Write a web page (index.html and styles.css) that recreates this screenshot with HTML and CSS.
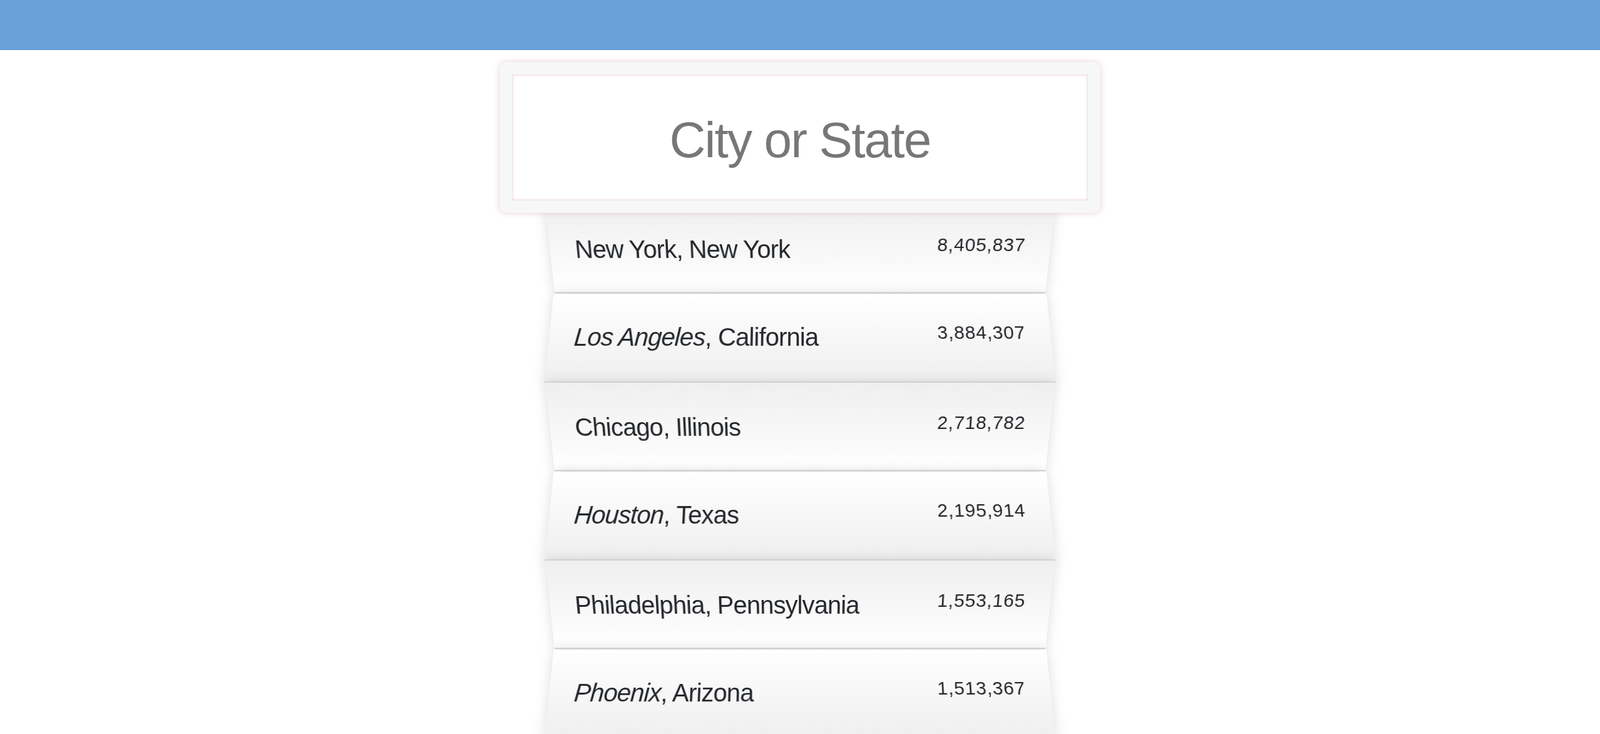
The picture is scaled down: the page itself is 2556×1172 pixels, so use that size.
FILE: index.html
```html
<!DOCTYPE html>
<html lang="en">
<head>
<meta charset="utf-8">
<title>Type Ahead</title>
<link rel="stylesheet" href="styles.css">
</head>
<body>
<header class="topbar"></header>
<form class="search-form">
  <input type="text" class="search" placeholder="City or State">
  <ul class="suggestions">
    <li><span class="name">New York, New York</span><span class="population">8,405,837</span></li>
    <li><span class="name"><em>Los Angeles</em>, California</span><span class="population">3,884,307</span></li>
    <li><span class="name">Chicago, Illinois</span><span class="population">2,718,782</span></li>
    <li><span class="name"><em>Houston</em>, Texas</span><span class="population">2,195,914</span></li>
    <li><span class="name">Philadelphia, Pennsylvania</span><span class="population">1,553,165</span></li>
    <li><span class="name"><em>Phoenix</em>, Arizona</span><span class="population">1,513,367</span></li>
  </ul>
</form>
</body>
</html>
```

FILE: styles.css
```css
html {
  box-sizing: border-box;
  background: #ffffff;
  font-family: "Liberation Sans", Arial, sans-serif;
  font-size: 40px;
  font-weight: 400;
  line-height: 1.5;
}
*, *::before, *::after {
  box-sizing: inherit;
}
body {
  margin: 0;
  overflow: hidden;
}
.topbar {
  height: 80px;
  background: #68a0d8;
}
.search-form {
  max-width: 800px;
  margin: 0 auto;
}
.search {
  display: block;
  position: relative;
  z-index: 2;
  width: 120%;
  height: 241px;
  margin: 19px 0 -18px -10%;
  padding: 44px 40px 36px;
  border: 20px solid #f7f7f7;
  border-radius: 10px;
  outline: 0;
  background: #ffffff;
  text-align: center;
  font-family: "Liberation Sans", Arial, sans-serif;
  font-size: 80px;
  letter-spacing: -1.8px;
  color: #333;
  box-shadow: 0 0 10px rgba(190, 120, 125, 0.36), inset 0 0 4px rgba(190, 115, 120, 0.45);
}
.search::placeholder {
  color: #777777;
  opacity: 1;
}
.suggestions {
  margin: 0;
  padding: 0;
  position: relative;
}
.suggestions li {
  list-style: none;
  margin: 0;
  padding: 40px;
  display: flex;
  justify-content: space-between;
  border-bottom: 2px solid #d8d8d8;
  box-shadow: 0 0 20px rgba(0, 0, 0, 0.14);
  color: #24272b;
}
.suggestions li:nth-child(odd) {
  transform: perspective(200px) rotateX(-3deg) translateY(6px);
  background: linear-gradient(to top, #ffffff 0%, #efefef 100%);
}
.suggestions li:nth-child(even) {
  transform: perspective(200px) rotateX(3deg) translateY(4px) scale(1.001);
  background: linear-gradient(to bottom, #ffffff 0%, #efefef 100%);
}
.name {
  letter-spacing: -0.9px;
}
.name em {
  font-style: italic;
}
.population {
  font-size: 30px;
  letter-spacing: 0.8px;
}
```
